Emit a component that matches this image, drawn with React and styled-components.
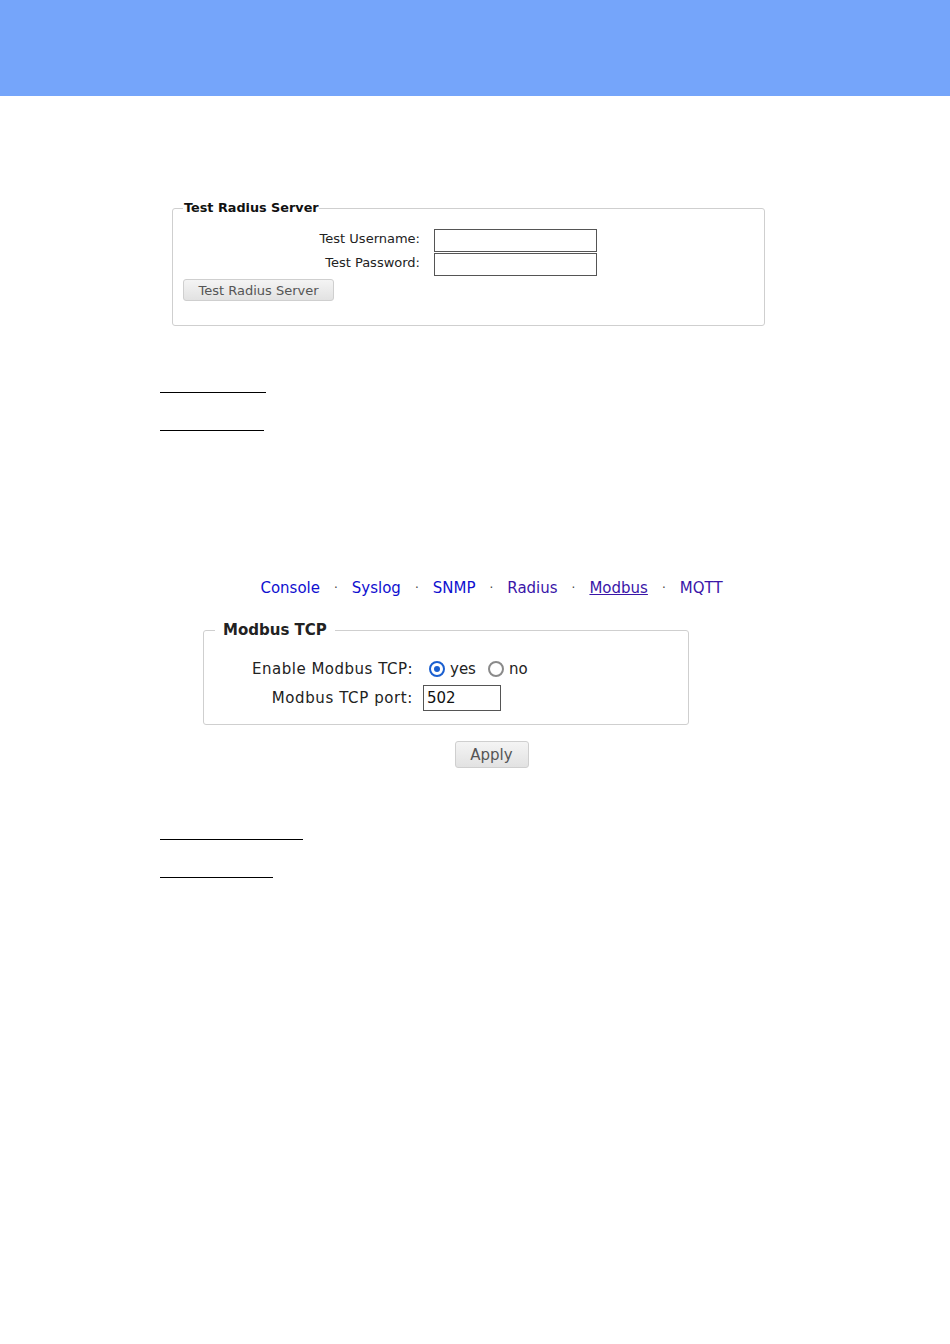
import React from "react";
import styled, { createGlobalStyle } from "styled-components";

const Global = createGlobalStyle`
  html, body { margin: 0; padding: 0; background: #fff; }
  body { font-family: "DejaVu Sans", Verdana, sans-serif; color: #222; }
`;

const Header = styled.header`
  height: 96px;
  background: #75a5fa;
`;

const Main = styled.main`
  padding: 104px 0 0 160px;
  display: flex;
  flex-direction: column;
`;

const RadiusFieldset = styled.fieldset`
  box-sizing: border-box;
  width: 593px;
  margin: 0 0 0 12px;
  padding: 13px 9px 24px 10px;
  border: 1px solid #cfcfcf;
  border-radius: 3px;
  font-family: "DejaVu Sans", Verdana, sans-serif;
  font-size: 13px;
`;

const RadiusLegend = styled.legend`
  padding: 0 0 0 1px;
  font-weight: bold;
  font-size: 12.8px;
  line-height: 16px;
  color: #111;
`;

const FormGrid = styled.div`
  display: grid;
  grid-template-columns: ${(p) => p.$labelWidth}px auto;
  column-gap: ${(p) => p.$gap}px;
  row-gap: ${(p) => p.$rowGap}px;
  align-items: center;
`;

const Label = styled.label`
  text-align: right;
  color: #222;
  font-size: ${(p) => p.$size}px;
  letter-spacing: ${(p) => p.$ls || 0}px;
  white-space: nowrap;
  position: relative;
  top: ${(p) => p.$nudge || 0}px;
`;

const TextInput = styled.input`
  box-sizing: border-box;
  width: ${(p) => p.$w}px;
  height: ${(p) => p.$h}px;
  border: 1px solid #555;
  margin: 0;
  padding: 0 3px;
  font-family: "DejaVu Sans", sans-serif;
  font-size: ${(p) => p.$size || 13}px;
  color: #111;
  background: #fff;
  outline: none;
`;

const GrayButton = styled.button`
  box-sizing: border-box;
  width: ${(p) => p.$w}px;
  height: ${(p) => p.$h}px;
  padding: 0;
  border: 1px solid #cfcfcf;
  border-radius: 3px;
  background: linear-gradient(#f4f4f4, #e2e2e2);
  color: #555;
  font-family: "DejaVu Sans", Verdana, sans-serif;
  font-size: ${(p) => p.$size}px;
  cursor: pointer;
`;

const ButtonRow = styled.div`
  margin-top: 3px;
`;

const Rule = styled.div`
  width: ${(p) => p.$w}px;
  height: 1px;
  background: #000;
  margin-top: ${(p) => p.$top}px;
`;

const Section = styled.section`
  width: 663px;
  display: flex;
  flex-direction: column;
  margin-top: 147px;
  font-family: "DejaVu Sans", Verdana, sans-serif;
`;

const Nav = styled.nav`
  display: flex;
  justify-content: center;
  align-items: center;
  gap: 14px;
  font-size: 15px;
  line-height: 20px;
`;

const NavLink = styled.a`
  color: ${(p) => (p.$visited ? "#3a16a8" : "#1010d0")};
  text-decoration: ${(p) => (p.$active ? "underline" : "none")};
  cursor: pointer;
`;

const Dot = styled.span`
  color: #444;
  font-size: 12px;
`;

const ModbusFieldset = styled.fieldset`
  box-sizing: border-box;
  width: 486px;
  margin: 23px 0 0 43px;
  padding: 21px 10px 13px 11px;
  border: 1px solid #cfcfcf;
  border-radius: 3px;
  font-size: 15px;
`;

const ModbusLegend = styled.legend`
  padding: 0 8px;
  font-weight: bold;
  font-size: 15px;
  line-height: 18px;
  color: #222;
`;

const RadioGroup = styled.div`
  display: flex;
  align-items: center;
  font-size: 15px;
`;

const Radio = styled.span`
  box-sizing: border-box;
  width: 16px;
  height: 16px;
  border-radius: 50%;
  border: 2px solid ${(p) => (p.$checked ? "#1a5fd0" : "#8a8a8a")};
  margin: 0 5px 0 ${(p) => p.$ml}px;
  display: inline-flex;
  align-items: center;
  justify-content: center;
  &::after {
    content: "";
    width: 6px;
    height: 6px;
    border-radius: 50%;
    background: ${(p) => (p.$checked ? "#1a5fd0" : "transparent")};
  }
`;

const RadioText = styled.span`
  color: #222;
`;

const ApplyRow = styled.div`
  display: flex;
  justify-content: center;
  margin-top: 16px;
`;

export default function App() {
  return (
    <>
      <Global />
      <Header />
      <Main>
        <RadiusFieldset>
          <RadiusLegend>Test Radius Server</RadiusLegend>
          <FormGrid $labelWidth={237} $gap={14} $rowGap={1}>
            <Label $size={13} $nudge={-2}>Test Username:</Label>
            <TextInput $w={163} $h={23} />
            <Label $size={13} $nudge={-2}>Test Password:</Label>
            <TextInput $w={163} $h={23} type="password" />
          </FormGrid>
          <ButtonRow>
            <GrayButton $w={151} $h={22} $size={13}>Test Radius Server</GrayButton>
          </ButtonRow>
        </RadiusFieldset>

        <Rule $w={106} $top={66} />
        <Rule $w={104} $top={37} />

        <Section>
          <Nav>
            <NavLink>Console</NavLink>
            <Dot>·</Dot>
            <NavLink>Syslog</NavLink>
            <Dot>·</Dot>
            <NavLink>SNMP</NavLink>
            <Dot>·</Dot>
            <NavLink $visited>Radius</NavLink>
            <Dot>·</Dot>
            <NavLink $active $visited>Modbus</NavLink>
            <Dot>·</Dot>
            <NavLink $visited>MQTT</NavLink>
          </Nav>
          <ModbusFieldset>
            <ModbusLegend>Modbus TCP</ModbusLegend>
            <FormGrid $labelWidth={198} $gap={10} $rowGap={7}>
              <Label $size={15} $ls={0.5}>Enable Modbus TCP:</Label>
              <RadioGroup>
                <Radio $checked $ml={6} />
                <RadioText>yes</RadioText>
                <Radio $ml={12} />
                <RadioText>no</RadioText>
              </RadioGroup>
              <Label $size={15} $ls={0.6}>Modbus TCP port:</Label>
              <TextInput $w={78} $h={26} $size={15} defaultValue="502" />
            </FormGrid>
          </ModbusFieldset>
          <ApplyRow>
            <GrayButton $w={74} $h={27} $size={15}>Apply</GrayButton>
          </ApplyRow>
        </Section>

        <Rule $w={143} $top={71} />
        <Rule $w={113} $top={37} />
      </Main>
    </>
  );
}
